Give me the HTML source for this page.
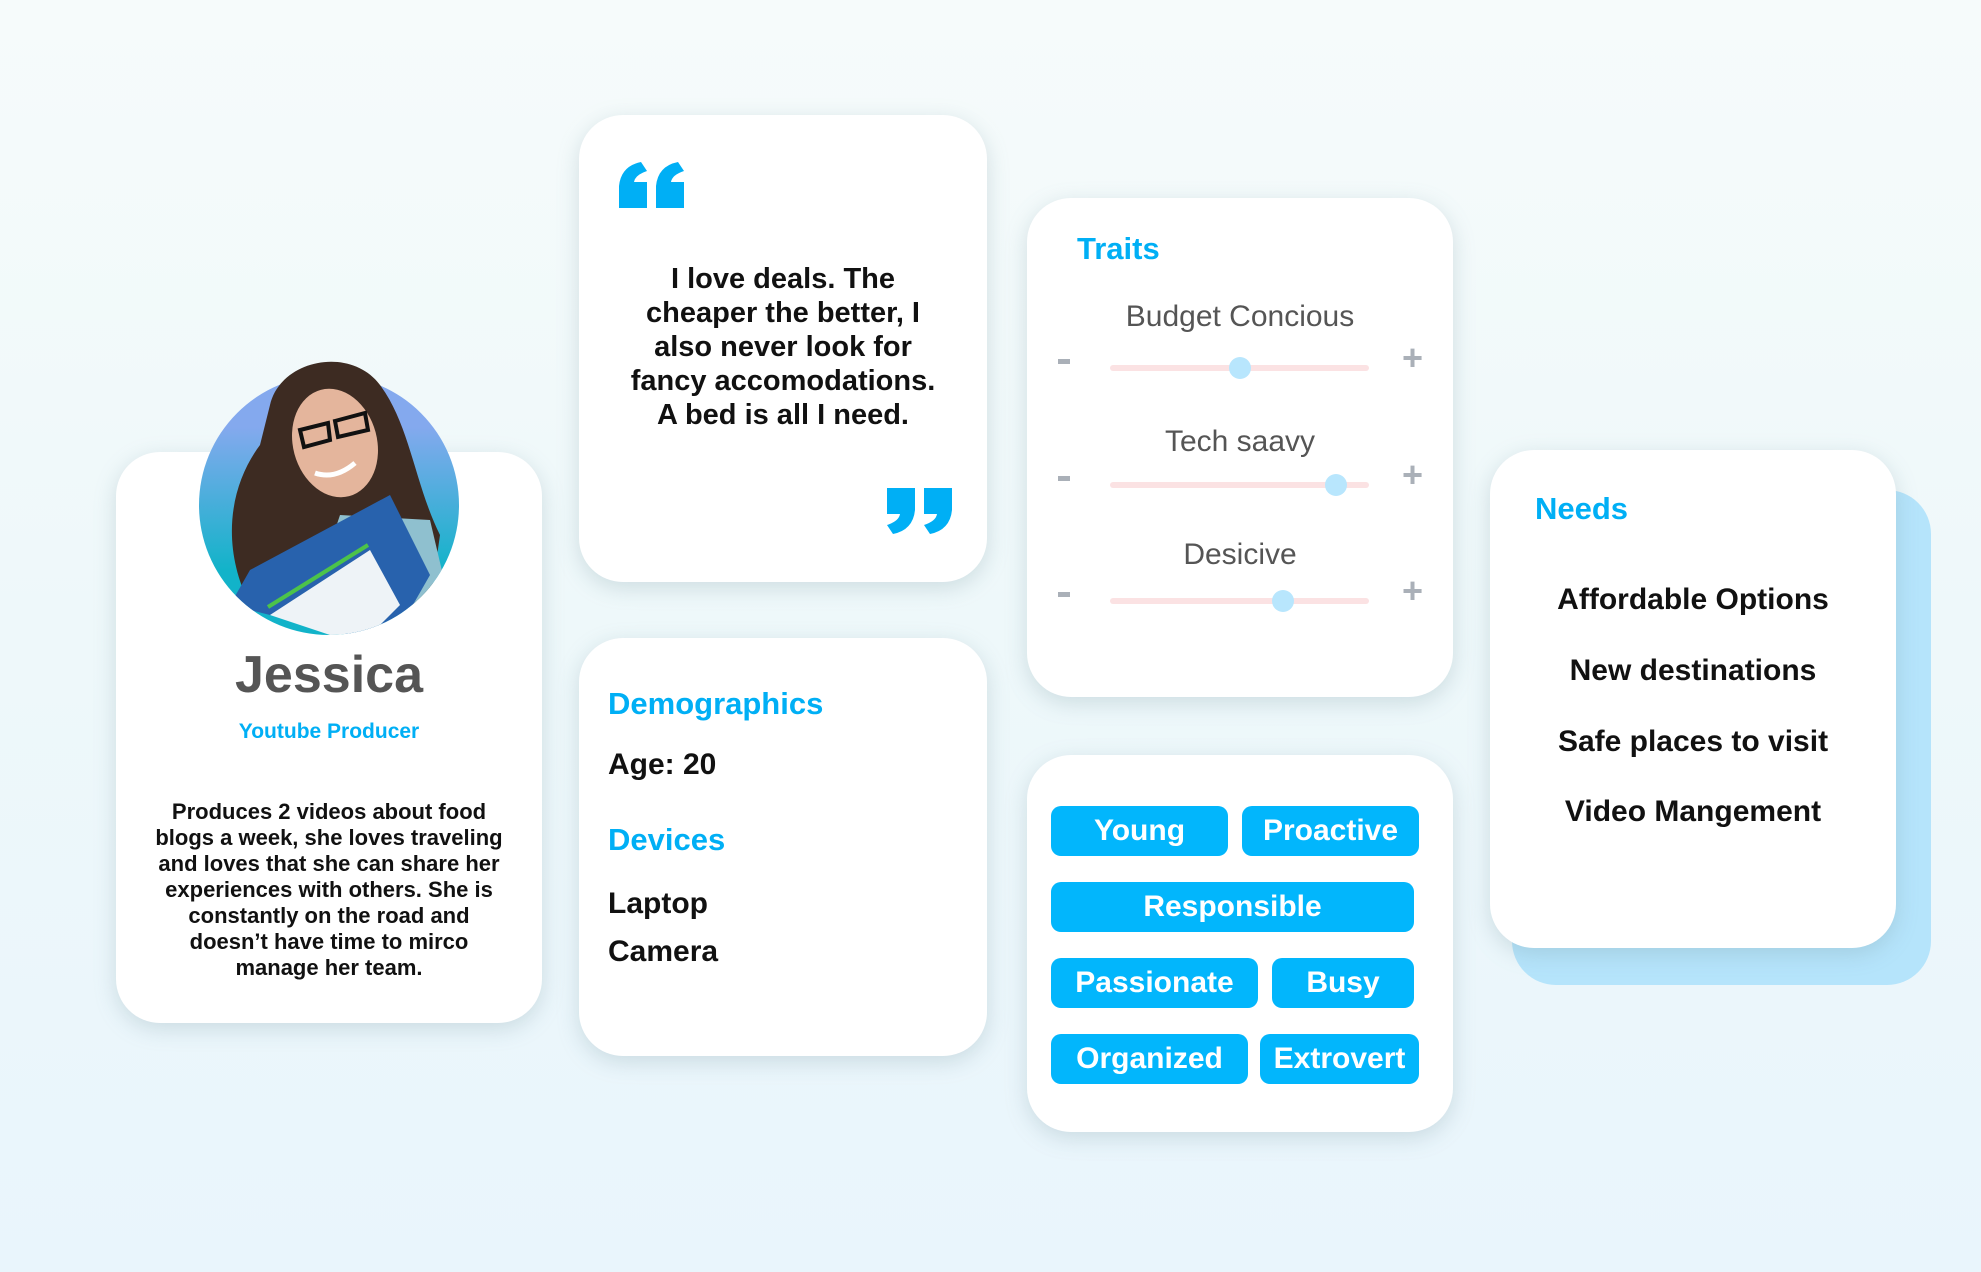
<!DOCTYPE html>
<html><head><meta charset="utf-8"><style>
*{margin:0;padding:0;box-sizing:border-box}
body{width:1981px;height:1272px;overflow:hidden;position:relative;font-family:"Liberation Sans",sans-serif;background:linear-gradient(180deg,#f6fbfb 0%,#eef8fa 50%,#e9f5fc 100%)}
.card{position:absolute;background:#fff;border-radius:44px;box-shadow:0 6px 22px rgba(120,150,160,.28)}
.abs{position:absolute}
.blue{color:#00aff5;font-weight:bold}
.c{text-align:center}
.tag{position:absolute;background:#02b6fc;color:#fff;font-weight:bold;font-size:30px;border-radius:10px;text-align:center;line-height:50px;height:50px}
.track{position:absolute;left:1110px;width:259px;height:6px;border-radius:3px;background:#fbe2e3}
.thumb{position:absolute;width:22px;height:22px;border-radius:50%;background:#b8e6fd}
.mn{position:absolute;left:1058px;width:12px;height:5px;background:#aab0b8}
.pl{position:absolute;font-size:36px;font-weight:bold;color:#aab0b8;line-height:1}
.tl{position:absolute;left:1027px;width:426px;text-align:center;font-size:30px;color:#555}
</style></head><body>

<!-- profile card -->
<div class="card" style="left:116px;top:452px;width:426px;height:571px"></div>
<svg class="abs" style="left:190px;top:345px" width="280" height="295" viewBox="0 0 280 295">
<defs><linearGradient id="g" x1="0" y1="0" x2="0" y2="1"><stop offset="0.2" stop-color="#84a9ee"/><stop offset="0.75" stop-color="#12b3c9"/></linearGradient>
<clipPath id="cp"><circle cx="139" cy="160" r="130"/><rect x="40" y="0" width="200" height="60"/></clipPath></defs>
<circle cx="139" cy="160" r="130" fill="url(#g)"/>
<g clip-path="url(#cp)">
<path d="M80 60 C90 15 160 0 190 40 C220 80 225 140 250 190 L240 260 L60 260 C30 200 40 140 70 100 Z" fill="#3d2b22"/>
<path d="M150 170 L240 175 L260 260 L120 260 Z" fill="#8fc0cf"/>
<ellipse cx="145" cy="98" rx="42" ry="55" fill="#e4b59c" transform="rotate(-15 145 98)"/>
<path d="M110 85 L138 78 L140 95 L114 102 Z M145 76 L175 68 L178 85 L148 92 Z" fill="none" stroke="#111" stroke-width="4"/>
<path d="M125 128 Q145 135 165 118" stroke="#fff" stroke-width="5" fill="none"/>
<path d="M40 260 L60 225 L200 150 L240 230 L200 300 Z" fill="#2862ad"/>
<path d="M80 270 L180 205 L210 260 L170 300 Z" fill="#eef3f7"/>
<path d="M78 262 L178 200" stroke="#4cc34a" stroke-width="4"/>
</g>
</svg>
<div class="abs c" style="left:116px;top:645px;width:426px;font-size:52px;font-weight:bold;color:#555">Jessica</div>
<div class="abs c blue" style="left:116px;top:720px;width:426px;font-size:21px">Youtube Producer</div>
<div class="abs c" style="left:116px;top:799px;width:426px;font-size:22px;line-height:26px;color:#111;font-weight:bold;white-space:nowrap">Produces 2 videos about food<br>blogs a week, she loves traveling<br>and loves that she can share her<br>experiences with others. She is<br>constantly on the road and<br>doesn’t have time to mirco<br>manage her team.</div>

<!-- quote card -->
<div class="card" style="left:579px;top:115px;width:408px;height:467px"></div>
<svg class="abs" style="left:619px;top:162px" width="66" height="46" viewBox="0 0 66 46">
<path d="M0 46 L0 24 Q2 4 22 0 L28 9 Q16 13 15 20 L28 20 L28 46 Z" fill="#00aff5"/>
<path d="M37 46 L37 24 Q39 4 59 0 L65 9 Q53 13 52 20 L65 20 L65 46 Z" fill="#00aff5"/>
</svg>
<svg class="abs" style="left:886px;top:488px" width="66" height="46" viewBox="0 0 66 46">
<g transform="rotate(180 33 23)">
<path d="M0 46 L0 24 Q2 4 22 0 L28 9 Q16 13 15 20 L28 20 L28 46 Z" fill="#00aff5"/>
<path d="M37 46 L37 24 Q39 4 59 0 L65 9 Q53 13 52 20 L65 20 L65 46 Z" fill="#00aff5"/>
</g>
</svg>
<div class="abs c" style="left:579px;top:262px;width:408px;font-size:29px;line-height:34px;font-weight:bold;color:#111;white-space:nowrap">I love deals. The<br>cheaper the better, I<br>also never look for<br>fancy accomodations.<br>A bed is all I need.</div>

<!-- demographics -->
<div class="card" style="left:579px;top:638px;width:408px;height:418px"></div>
<div class="abs blue" style="left:608px;top:686px;font-size:31px">Demographics</div>
<div class="abs" style="left:608px;top:748px;font-size:30px;font-weight:bold;color:#111">Age: 20</div>
<div class="abs blue" style="left:608px;top:822px;font-size:31px">Devices</div>
<div class="abs" style="left:608px;top:887px;font-size:30px;font-weight:bold;color:#111">Laptop</div>
<div class="abs" style="left:608px;top:935px;font-size:30px;font-weight:bold;color:#111">Camera</div>

<!-- traits -->
<div class="card" style="left:1027px;top:198px;width:426px;height:499px"></div>
<div class="abs blue" style="left:1077px;top:231px;font-size:31px">Traits</div>
<div class="tl" style="top:300px">Budget Concious</div>
<div class="mn" style="top:359px"></div><div class="pl" style="left:1402px;top:340px">+</div>
<div class="track" style="top:365px"></div><div class="thumb" style="left:1229px;top:357px"></div>
<div class="tl" style="top:425px">Tech saavy</div>
<div class="mn" style="top:476px"></div><div class="pl" style="left:1402px;top:457px">+</div>
<div class="track" style="top:482px"></div><div class="thumb" style="left:1325px;top:474px"></div>
<div class="tl" style="top:538px">Desicive</div>
<div class="mn" style="top:592px"></div><div class="pl" style="left:1402px;top:573px">+</div>
<div class="track" style="top:598px"></div><div class="thumb" style="left:1272px;top:590px"></div>

<!-- tags -->
<div class="card" style="left:1027px;top:755px;width:426px;height:377px"></div>
<div class="tag" style="left:1051px;top:806px;width:177px">Young</div>
<div class="tag" style="left:1242px;top:806px;width:177px">Proactive</div>
<div class="tag" style="left:1051px;top:882px;width:363px">Responsible</div>
<div class="tag" style="left:1051px;top:958px;width:207px">Passionate</div>
<div class="tag" style="left:1272px;top:958px;width:142px">Busy</div>
<div class="tag" style="left:1051px;top:1034px;width:197px">Organized</div>
<div class="tag" style="left:1260px;top:1034px;width:159px">Extrovert</div>

<!-- needs -->
<div class="abs" style="left:1512px;top:490px;width:419px;height:495px;border-radius:44px;background:#b5e4fb"></div>
<div class="card" style="left:1490px;top:450px;width:406px;height:498px"></div>
<div class="abs blue" style="left:1535px;top:491px;font-size:31px">Needs</div>
<div class="abs c" style="left:1490px;top:582px;width:406px;font-size:30px;font-weight:bold;color:#111;line-height:36px">Affordable Options</div>
<div class="abs c" style="left:1490px;top:653px;width:406px;font-size:30px;font-weight:bold;color:#111;line-height:36px">New destinations</div>
<div class="abs c" style="left:1490px;top:724px;width:406px;font-size:30px;font-weight:bold;color:#111;line-height:36px">Safe places to visit</div>
<div class="abs c" style="left:1490px;top:794px;width:406px;font-size:30px;font-weight:bold;color:#111;line-height:36px">Video Mangement</div>
</body></html>
